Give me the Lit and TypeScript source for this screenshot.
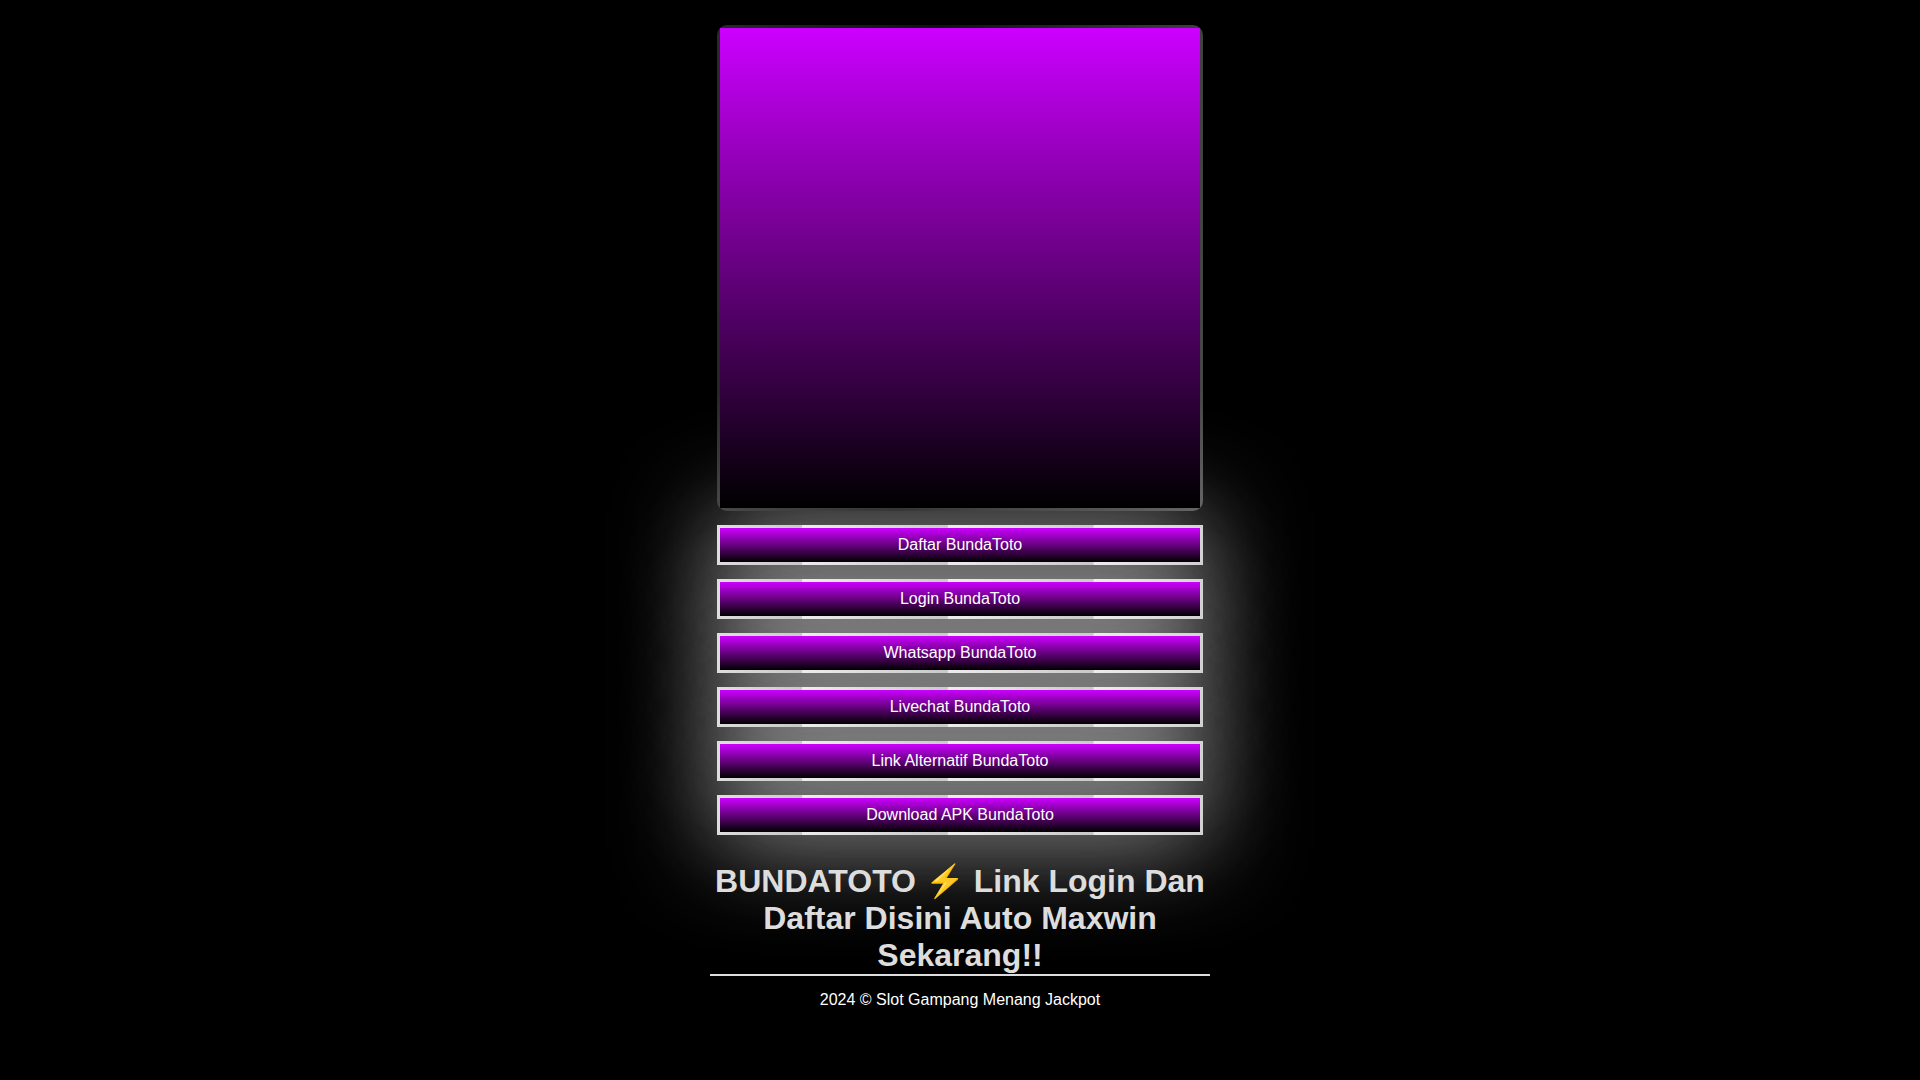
import { LitElement, html, css } from "lit";
import { customElement } from "lit/decorators.js";

const LINKS = [
  "Daftar BundaToto",
  "Login BundaToto",
  "Whatsapp BundaToto",
  "Livechat BundaToto",
  "Link Alternatif BundaToto",
  "Download APK BundaToto",
];

@customElement("app-root")
export class AppRoot extends LitElement {
  static styles = css`
    :host {
      display: block;
      min-height: 100vh;
      background: #000;
      color: #fff;
      font: 16px/18px "Liberation Sans", Arial, sans-serif;
      text-align: center;
      overflow: hidden;
    }
    .page {
      position: relative;
      z-index: 0;
      box-sizing: border-box;
      max-width: 500px;
      margin: 0 auto;
      padding-top: 25px;
    }
    .stack {
      display: flex;
      flex-direction: column;
      gap: 14px;
      padding: 0 7px;
    }
    .banner {
      padding: 3px;
      border-radius: 10px;
      background:
        linear-gradient(transparent 75%, rgba(255, 255, 255, 0.16)),
        linear-gradient(95deg, #2a2a2a, #101010 42%, #484848);
    }
    .art {
      aspect-ratio: 1;
      background: linear-gradient(#cc00ff, #000);
    }
    .link {
      position: relative;
      display: block;
      padding: 3px;
      color: #fff;
      text-decoration: none;
      background: linear-gradient(100deg, #eee, #c8c8c8) 25% 0 / 30% 100%;
    }
    .link::before {
      content: "";
      position: absolute;
      inset: 0;
      z-index: -1;
      box-shadow: 0 0 100px #d3d3d3;
    }
    .label {
      display: block;
      padding: 8px;
      background: linear-gradient(#cc00ff, #000);
    }
    h1 {
      margin: 28px 0 0;
      border-bottom: 2px solid #ddd;
      color: #ddd;
      font-size: 32px;
      line-height: 37px;
    }
    .foot {
      margin: 15px 0 0;
    }
  `;

  render() {
    return html`
      <main class="page">
        <div class="stack">
          <div class="banner"><div class="art"></div></div>
          ${LINKS.map((t) => html`<a class="link" href="#"><span class="label">${t}</span></a>`)}
        </div>
        <h1>BUNDATOTO ⚡ Link Login Dan Daftar Disini Auto Maxwin Sekarang!!</h1>
        <p class="foot">2024 © Slot Gampang Menang Jackpot</p>
      </main>
    `;
  }
}
